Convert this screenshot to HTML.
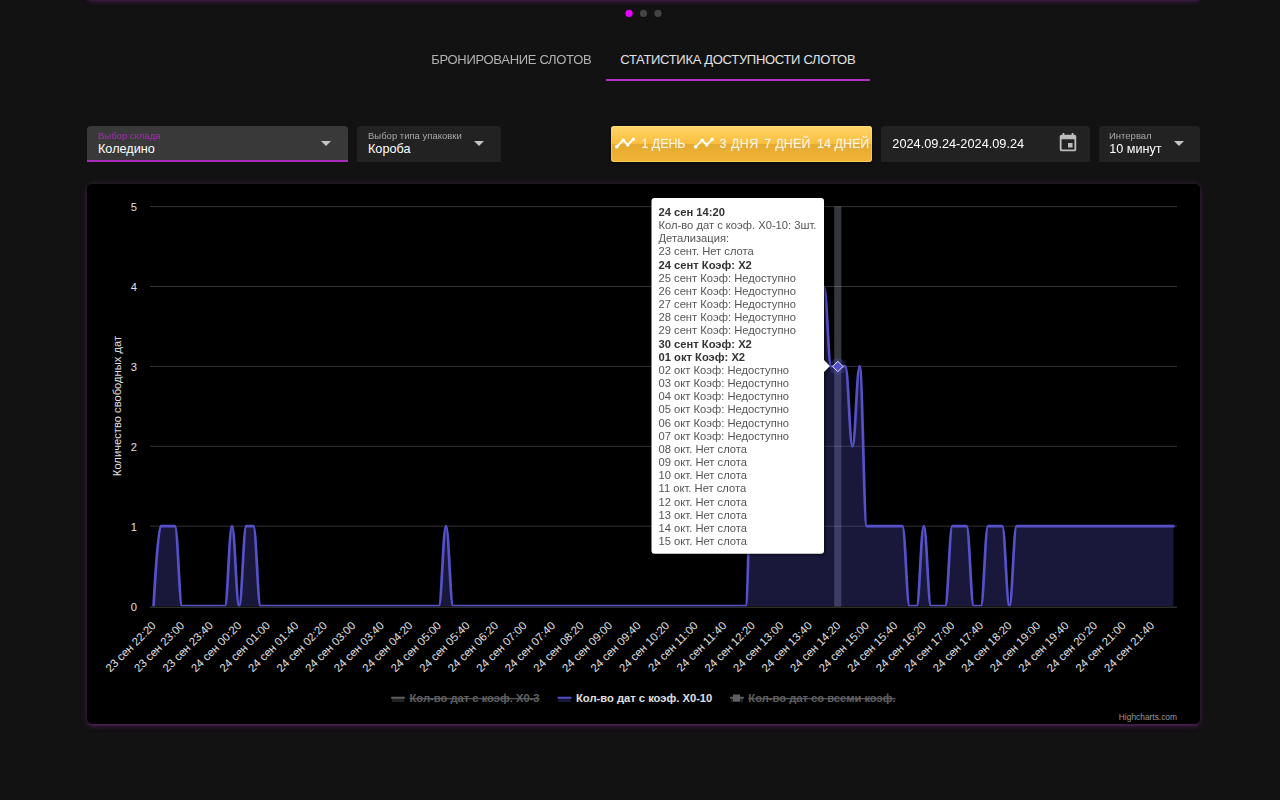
<!DOCTYPE html>
<html lang="ru">
<head>
<meta charset="utf-8">
<title>Статистика доступности слотов</title>
<style>
html,body{margin:0;padding:0;}
body{width:1280px;height:800px;overflow:hidden;background:#121212;color:#fff;
  font-family:"Liberation Sans",sans-serif;position:relative;}
.abs{position:absolute;}
.glow{box-shadow:0 3px 3px -2px rgba(200,60,225,.22),0 3px 4px 0 rgba(200,60,225,.15),0 1px 8px 0 rgba(200,60,225,.11),0 -1px 5px 0 rgba(255,255,255,.05);}
.topcard{left:87px;top:-41.4px;width:1113px;height:40px;background:#000;border-radius:4px;}
.tab{top:45px;height:34px;line-height:29px;font-size:13px;letter-spacing:-0.31px;white-space:nowrap;text-align:center;color:#b2b2b2;}
.tab.on{color:#e2e2e2;border-bottom:2px solid #b42fc4;}
.field{top:126px;height:36px;background:#222;border-radius:4px 4px 0 0;box-sizing:border-box;}
.field .lbl{position:absolute;top:4px;font-size:9.5px;line-height:11px;color:#a8a8a8;white-space:nowrap;will-change:transform;}
.field .val{position:absolute;top:15px;font-size:12.67px;line-height:16px;color:#fff;white-space:nowrap;}
.arrow{position:absolute;width:0;height:0;border-left:5px solid transparent;border-right:5px solid transparent;border-top:5px solid #c4c4c4;}
.gs{will-change:transform;}
.btns{left:611px;top:126px;width:261px;height:36px;border-radius:3px;
  background:linear-gradient(to bottom,#ffd56c 0%,#fbbe3c 49.5%,#e4a92f 50.5%,#f1b636 100%);
  box-shadow:0 1px 3px rgba(0,0,0,.6),inset 0 0 0 1px rgba(255,226,140,.45);}
.btns span{position:absolute;top:0;line-height:36px;font-size:12.3px;color:rgba(255,255,255,.82);white-space:nowrap;letter-spacing:.3px;-webkit-text-stroke:.35px rgba(255,255,255,.6);
  text-shadow:0 1px 0 rgba(160,110,0,.25);}
.btns svg{position:absolute;top:6.3px;width:22px;height:22px;fill:#fff;}
.card{left:87px;top:184px;width:1112.5px;height:540px;background:#000;border-radius:5px;}
svg text{font-family:"Liberation Sans",sans-serif;}
</style>
</head>
<body>
<div class="abs topcard glow"></div>

<svg class="abs" style="left:620px;top:5px;" width="46" height="17" viewBox="620 5 46 17">
  <circle cx="629.05" cy="13.45" r="3.6" fill="#e800ff"/>
  <circle cx="643.5" cy="13.45" r="3.6" fill="#444"/>
  <circle cx="658" cy="13.45" r="3.6" fill="#444"/>
</svg>

<div class="abs tab gs" style="left:416.7px;width:188.6px;">БРОНИРОВАНИЕ СЛОТОВ</div>
<div class="abs tab on" style="left:605.5px;width:264.5px;">СТАТИСТИКА ДОСТУПНОСТИ СЛОТОВ</div>

<div class="abs field" style="left:87px;width:261px;background:#393939;border-bottom:2px solid #ab2cbb;">
  <div class="lbl" style="left:11px;color:#a72db6;">Выбор склада</div>
  <div class="val" style="left:11px;">Коледино</div>
  <div class="arrow" style="left:233.8px;top:15px;"></div>
</div>
<div class="abs field" style="left:357px;width:144px;">
  <div class="lbl" style="left:11px;">Выбор типа упаковки</div>
  <div class="val" style="left:11px;">Короба</div>
  <div class="arrow" style="left:117px;top:15px;"></div>
</div>

<div class="abs btns gs">
  <svg style="left:2.9px" viewBox="0 0 24 24"><path d="M3,14L3.5,14.07L8.07,9.5C7.89,8.85 8.06,8.11 8.59,7.59C9.37,6.8 10.63,6.8 11.41,7.59C11.94,8.11 12.11,8.85 11.93,9.5L14.5,12.07L15,12C15.18,12 15.35,12 15.5,12.07L19.07,8.5C19,8.35 19,8.18 19,8A2,2 0 0,1 21,6A2,2 0 0,1 23,8A2,2 0 0,1 21,10C20.82,10 20.65,10 20.5,9.93L16.93,13.5C17,13.65 17,13.82 17,14A2,2 0 0,1 15,16A2,2 0 0,1 13,14L13.07,13.5L10.5,10.93C10.18,11 9.82,11 9.5,10.93L4.93,15.5L5,16A2,2 0 0,1 3,18A2,2 0 0,1 1,16A2,2 0 0,1 3,14Z"/></svg>
  <span style="left:30.6px;letter-spacing:0">1 ДЕНЬ</span>
  <svg style="left:81.9px" viewBox="0 0 24 24"><path d="M3,14L3.5,14.07L8.07,9.5C7.89,8.85 8.06,8.11 8.59,7.59C9.37,6.8 10.63,6.8 11.41,7.59C11.94,8.11 12.11,8.85 11.93,9.5L14.5,12.07L15,12C15.18,12 15.35,12 15.5,12.07L19.07,8.5C19,8.35 19,8.18 19,8A2,2 0 0,1 21,6A2,2 0 0,1 23,8A2,2 0 0,1 21,10C20.82,10 20.65,10 20.5,9.93L16.93,13.5C17,13.65 17,13.82 17,14A2,2 0 0,1 15,16A2,2 0 0,1 13,14L13.07,13.5L10.5,10.93C10.18,11 9.82,11 9.5,10.93L4.93,15.5L5,16A2,2 0 0,1 3,18A2,2 0 0,1 1,16A2,2 0 0,1 3,14Z"/></svg>
  <span style="left:108.6px;letter-spacing:.55px">3 ДНЯ</span>
  <span style="left:153.3px">7 ДНЕЙ</span>
  <span style="left:205.9px;letter-spacing:.15px">14 ДНЕЙ</span>
</div>

<div class="abs field gs" style="left:881px;width:209px;">
  <div class="val" style="left:11.3px;top:10px;font-size:12.76px;">2024.09.24-2024.09.24</div>
  <svg style="position:absolute;left:176px;top:6px;width:22px;height:22px;fill:#bdbdbd" viewBox="0 0 24 24"><path d="M19,19H5V8H19M16,1V3H8V1H6V3H5C3.89,3 3,3.89 3,5V19A2,2 0 0,0 5,21H19A2,2 0 0,0 21,19V5C21,3.89 20.1,3 19,3H18V1M17,12H12V17H17V12Z"/></svg>
</div>
<div class="abs field gs" style="left:1099px;width:101px;">
  <div class="lbl" style="left:10.2px;">Интервал</div>
  <div class="val" style="left:10.2px;">10 минут</div>
  <div class="arrow" style="left:74.6px;top:15px;"></div>
</div>

<div class="abs card glow"></div>
<svg class="abs" style="left:87px;top:184px;" width="1113" height="540" viewBox="87 184 1113 540">
  <g>
<path d="M 150.0 526.2 L 1177.0 526.2" stroke="#333333" stroke-width="1" fill="none"/>
<path d="M 150.0 446.3 L 1177.0 446.3" stroke="#333333" stroke-width="1" fill="none"/>
<path d="M 150.0 366.4 L 1177.0 366.4" stroke="#333333" stroke-width="1" fill="none"/>
<path d="M 150.0 286.5 L 1177.0 286.5" stroke="#333333" stroke-width="1" fill="none"/>
<path d="M 150.0 206.6 L 1177.0 206.6" stroke="#333333" stroke-width="1" fill="none"/>
<path d="M 150 607.15 L 1177 607.15" stroke="#2d2d2d" stroke-width="1.5" fill="none"/>

  </g>
  <g font-size="11.2px" fill="#e0e0e3">
<text x="137" y="610.5" text-anchor="end">0</text>
<text x="137" y="530.5" text-anchor="end">1</text>
<text x="137" y="450.5" text-anchor="end">2</text>
<text x="137" y="370.5" text-anchor="end">3</text>
<text x="137" y="290.5" text-anchor="end">4</text>
<text x="137" y="210.5" text-anchor="end">5</text>

  </g>
  <text x="121" y="406" font-size="11.2px" fill="#e0e0e3" text-anchor="middle" transform="rotate(-90 121 406)">Количество свободных дат</text>
  <!-- crosshair -->
  <rect x="834.2" y="206.5" width="7.13" height="400" fill="rgba(204,214,235,0.25)"/>
  <!-- series -->
  <clipPath id="pc"><rect x="150" y="200" width="1027.5" height="406.2"/></clipPath>
  <g clip-path="url(#pc)">
  <path d="M 153.57 606.05 C 153.57 606.05 157.85 526.17 160.70 526.17 C 163.55 526.17 164.98 526.17 167.83 526.17 C 170.68 526.17 172.11 526.17 174.96 526.17 C 177.81 526.17 179.24 606.05 182.09 606.05 C 184.95 606.05 186.37 606.05 189.23 606.05 C 192.08 606.05 193.50 606.05 196.36 606.05 C 199.21 606.05 200.64 606.05 203.49 606.05 C 206.34 606.05 207.77 606.05 210.62 606.05 C 213.47 606.05 214.90 606.05 217.75 606.05 C 220.61 606.05 222.03 606.05 224.89 606.05 C 227.74 606.05 229.16 526.17 232.02 526.17 C 234.87 526.17 236.30 606.05 239.15 606.05 C 242.00 606.05 243.43 526.17 246.28 526.17 C 249.13 526.17 250.56 526.17 253.41 526.17 C 256.27 526.17 257.69 606.05 260.55 606.05 C 263.40 606.05 264.82 606.05 267.68 606.05 C 270.53 606.05 271.96 606.05 274.81 606.05 C 277.66 606.05 279.09 606.05 281.94 606.05 C 284.79 606.05 286.22 606.05 289.07 606.05 C 291.93 606.05 293.35 606.05 296.20 606.05 C 299.06 606.05 300.48 606.05 303.34 606.05 C 306.19 606.05 307.62 606.05 310.47 606.05 C 313.32 606.05 314.75 606.05 317.60 606.05 C 320.45 606.05 321.88 606.05 324.73 606.05 C 327.59 606.05 329.01 606.05 331.86 606.05 C 334.72 606.05 336.14 606.05 339.00 606.05 C 341.85 606.05 343.28 606.05 346.13 606.05 C 348.98 606.05 350.41 606.05 353.26 606.05 C 356.11 606.05 357.54 606.05 360.39 606.05 C 363.25 606.05 364.67 606.05 367.52 606.05 C 370.38 606.05 371.80 606.05 374.66 606.05 C 377.51 606.05 378.94 606.05 381.79 606.05 C 384.64 606.05 386.07 606.05 388.92 606.05 C 391.77 606.05 393.20 606.05 396.05 606.05 C 398.90 606.05 400.33 606.05 403.18 606.05 C 406.04 606.05 407.46 606.05 410.32 606.05 C 413.17 606.05 414.60 606.05 417.45 606.05 C 420.30 606.05 421.73 606.05 424.58 606.05 C 427.43 606.05 428.86 606.05 431.71 606.05 C 434.56 606.05 435.99 606.05 438.84 606.05 C 441.70 606.05 443.12 526.17 445.98 526.17 C 448.83 526.17 450.25 606.05 453.11 606.05 C 455.96 606.05 457.39 606.05 460.24 606.05 C 463.09 606.05 464.52 606.05 467.37 606.05 C 470.22 606.05 471.65 606.05 474.50 606.05 C 477.36 606.05 478.78 606.05 481.64 606.05 C 484.49 606.05 485.91 606.05 488.77 606.05 C 491.62 606.05 493.05 606.05 495.90 606.05 C 498.75 606.05 500.18 606.05 503.03 606.05 C 505.88 606.05 507.31 606.05 510.16 606.05 C 513.02 606.05 514.44 606.05 517.30 606.05 C 520.15 606.05 521.57 606.05 524.43 606.05 C 527.28 606.05 528.71 606.05 531.56 606.05 C 534.41 606.05 535.84 606.05 538.69 606.05 C 541.54 606.05 542.97 606.05 545.82 606.05 C 548.68 606.05 550.10 606.05 552.95 606.05 C 555.81 606.05 557.23 606.05 560.09 606.05 C 562.94 606.05 564.37 606.05 567.22 606.05 C 570.07 606.05 571.50 606.05 574.35 606.05 C 577.20 606.05 578.63 606.05 581.48 606.05 C 584.34 606.05 585.76 606.05 588.61 606.05 C 591.47 606.05 592.89 606.05 595.75 606.05 C 598.60 606.05 600.03 606.05 602.88 606.05 C 605.73 606.05 607.16 606.05 610.01 606.05 C 612.86 606.05 614.29 606.05 617.14 606.05 C 620.00 606.05 621.42 606.05 624.27 606.05 C 627.13 606.05 628.55 606.05 631.41 606.05 C 634.26 606.05 635.69 606.05 638.54 606.05 C 641.39 606.05 642.82 606.05 645.67 606.05 C 648.52 606.05 649.95 606.05 652.80 606.05 C 655.65 606.05 657.08 606.05 659.93 606.05 C 662.79 606.05 664.21 606.05 667.07 606.05 C 669.92 606.05 671.35 606.05 674.20 606.05 C 677.05 606.05 678.48 606.05 681.33 606.05 C 684.18 606.05 685.61 606.05 688.46 606.05 C 691.31 606.05 692.74 606.05 695.59 606.05 C 698.45 606.05 699.87 606.05 702.73 606.05 C 705.58 606.05 707.00 606.05 709.86 606.05 C 712.71 606.05 714.14 606.05 716.99 606.05 C 719.84 606.05 721.27 606.05 724.12 606.05 C 726.97 606.05 728.40 606.05 731.25 606.05 C 734.11 606.05 735.53 606.05 738.39 606.05 C 741.24 606.05 742.66 606.05 745.52 606.05 C 748.37 606.05 749.80 446.29 752.65 446.29 C 755.50 446.29 756.93 446.29 759.78 446.29 C 762.63 446.29 764.06 366.41 766.91 366.41 C 769.77 366.41 771.19 366.41 774.05 366.41 C 776.90 366.41 778.32 366.41 781.18 366.41 C 784.03 366.41 785.46 286.53 788.31 286.53 C 791.16 286.53 792.59 286.53 795.44 286.53 C 798.29 286.53 799.72 286.53 802.57 286.53 C 805.43 286.53 806.85 286.53 809.70 286.53 C 812.56 286.53 813.98 286.53 816.84 286.53 C 819.69 286.53 821.12 286.53 823.97 286.53 C 826.82 286.53 828.25 366.41 831.10 366.41 C 833.95 366.41 835.38 366.41 838.23 366.41 C 841.09 366.41 842.51 366.41 845.36 366.41 C 848.22 366.41 849.64 446.29 852.50 446.29 C 855.35 446.29 856.78 366.41 859.63 366.41 C 862.48 366.41 863.91 526.17 866.76 526.17 C 869.61 526.17 871.04 526.17 873.89 526.17 C 876.75 526.17 878.17 526.17 881.02 526.17 C 883.88 526.17 885.30 526.17 888.16 526.17 C 891.01 526.17 892.44 526.17 895.29 526.17 C 898.14 526.17 899.57 526.17 902.42 526.17 C 905.27 526.17 906.70 606.05 909.55 606.05 C 912.40 606.05 913.83 606.05 916.68 606.05 C 919.54 606.05 920.96 526.17 923.82 526.17 C 926.67 526.17 928.10 606.05 930.95 606.05 C 933.80 606.05 935.23 606.05 938.08 606.05 C 940.93 606.05 942.36 606.05 945.21 606.05 C 948.06 606.05 949.49 526.17 952.34 526.17 C 955.20 526.17 956.62 526.17 959.48 526.17 C 962.33 526.17 963.75 526.17 966.61 526.17 C 969.46 526.17 970.89 606.05 973.74 606.05 C 976.59 606.05 978.02 606.05 980.87 606.05 C 983.72 606.05 985.15 526.17 988.00 526.17 C 990.86 526.17 992.28 526.17 995.14 526.17 C 997.99 526.17 999.41 526.17 1002.27 526.17 C 1005.12 526.17 1006.55 606.05 1009.40 606.05 C 1012.25 606.05 1013.68 526.17 1016.53 526.17 C 1019.38 526.17 1020.81 526.17 1023.66 526.17 C 1026.52 526.17 1027.94 526.17 1030.80 526.17 C 1033.65 526.17 1035.07 526.17 1037.93 526.17 C 1040.78 526.17 1042.21 526.17 1045.06 526.17 C 1047.91 526.17 1049.34 526.17 1052.19 526.17 C 1055.04 526.17 1056.47 526.17 1059.32 526.17 C 1062.18 526.17 1063.60 526.17 1066.45 526.17 C 1069.31 526.17 1070.73 526.17 1073.59 526.17 C 1076.44 526.17 1077.87 526.17 1080.72 526.17 C 1083.57 526.17 1085.00 526.17 1087.85 526.17 C 1090.70 526.17 1092.13 526.17 1094.98 526.17 C 1097.84 526.17 1099.26 526.17 1102.11 526.17 C 1104.97 526.17 1106.39 526.17 1109.25 526.17 C 1112.10 526.17 1113.53 526.17 1116.38 526.17 C 1119.23 526.17 1120.66 526.17 1123.51 526.17 C 1126.36 526.17 1127.79 526.17 1130.64 526.17 C 1133.50 526.17 1134.92 526.17 1137.77 526.17 C 1140.63 526.17 1142.05 526.17 1144.91 526.17 C 1147.76 526.17 1149.19 526.17 1152.04 526.17 C 1154.89 526.17 1156.32 526.17 1159.17 526.17 C 1162.02 526.17 1163.45 526.17 1166.30 526.17 C 1169.15 526.17 1173.43 526.17 1173.43 526.17 L 1173.43 606.05 L 153.57 606.05 Z" fill="#544fc5" fill-opacity="0.3" stroke="none"/>
  <path d="M 153.57 606.05 C 153.57 606.05 157.85 526.17 160.70 526.17 C 163.55 526.17 164.98 526.17 167.83 526.17 C 170.68 526.17 172.11 526.17 174.96 526.17 C 177.81 526.17 179.24 606.05 182.09 606.05 C 184.95 606.05 186.37 606.05 189.23 606.05 C 192.08 606.05 193.50 606.05 196.36 606.05 C 199.21 606.05 200.64 606.05 203.49 606.05 C 206.34 606.05 207.77 606.05 210.62 606.05 C 213.47 606.05 214.90 606.05 217.75 606.05 C 220.61 606.05 222.03 606.05 224.89 606.05 C 227.74 606.05 229.16 526.17 232.02 526.17 C 234.87 526.17 236.30 606.05 239.15 606.05 C 242.00 606.05 243.43 526.17 246.28 526.17 C 249.13 526.17 250.56 526.17 253.41 526.17 C 256.27 526.17 257.69 606.05 260.55 606.05 C 263.40 606.05 264.82 606.05 267.68 606.05 C 270.53 606.05 271.96 606.05 274.81 606.05 C 277.66 606.05 279.09 606.05 281.94 606.05 C 284.79 606.05 286.22 606.05 289.07 606.05 C 291.93 606.05 293.35 606.05 296.20 606.05 C 299.06 606.05 300.48 606.05 303.34 606.05 C 306.19 606.05 307.62 606.05 310.47 606.05 C 313.32 606.05 314.75 606.05 317.60 606.05 C 320.45 606.05 321.88 606.05 324.73 606.05 C 327.59 606.05 329.01 606.05 331.86 606.05 C 334.72 606.05 336.14 606.05 339.00 606.05 C 341.85 606.05 343.28 606.05 346.13 606.05 C 348.98 606.05 350.41 606.05 353.26 606.05 C 356.11 606.05 357.54 606.05 360.39 606.05 C 363.25 606.05 364.67 606.05 367.52 606.05 C 370.38 606.05 371.80 606.05 374.66 606.05 C 377.51 606.05 378.94 606.05 381.79 606.05 C 384.64 606.05 386.07 606.05 388.92 606.05 C 391.77 606.05 393.20 606.05 396.05 606.05 C 398.90 606.05 400.33 606.05 403.18 606.05 C 406.04 606.05 407.46 606.05 410.32 606.05 C 413.17 606.05 414.60 606.05 417.45 606.05 C 420.30 606.05 421.73 606.05 424.58 606.05 C 427.43 606.05 428.86 606.05 431.71 606.05 C 434.56 606.05 435.99 606.05 438.84 606.05 C 441.70 606.05 443.12 526.17 445.98 526.17 C 448.83 526.17 450.25 606.05 453.11 606.05 C 455.96 606.05 457.39 606.05 460.24 606.05 C 463.09 606.05 464.52 606.05 467.37 606.05 C 470.22 606.05 471.65 606.05 474.50 606.05 C 477.36 606.05 478.78 606.05 481.64 606.05 C 484.49 606.05 485.91 606.05 488.77 606.05 C 491.62 606.05 493.05 606.05 495.90 606.05 C 498.75 606.05 500.18 606.05 503.03 606.05 C 505.88 606.05 507.31 606.05 510.16 606.05 C 513.02 606.05 514.44 606.05 517.30 606.05 C 520.15 606.05 521.57 606.05 524.43 606.05 C 527.28 606.05 528.71 606.05 531.56 606.05 C 534.41 606.05 535.84 606.05 538.69 606.05 C 541.54 606.05 542.97 606.05 545.82 606.05 C 548.68 606.05 550.10 606.05 552.95 606.05 C 555.81 606.05 557.23 606.05 560.09 606.05 C 562.94 606.05 564.37 606.05 567.22 606.05 C 570.07 606.05 571.50 606.05 574.35 606.05 C 577.20 606.05 578.63 606.05 581.48 606.05 C 584.34 606.05 585.76 606.05 588.61 606.05 C 591.47 606.05 592.89 606.05 595.75 606.05 C 598.60 606.05 600.03 606.05 602.88 606.05 C 605.73 606.05 607.16 606.05 610.01 606.05 C 612.86 606.05 614.29 606.05 617.14 606.05 C 620.00 606.05 621.42 606.05 624.27 606.05 C 627.13 606.05 628.55 606.05 631.41 606.05 C 634.26 606.05 635.69 606.05 638.54 606.05 C 641.39 606.05 642.82 606.05 645.67 606.05 C 648.52 606.05 649.95 606.05 652.80 606.05 C 655.65 606.05 657.08 606.05 659.93 606.05 C 662.79 606.05 664.21 606.05 667.07 606.05 C 669.92 606.05 671.35 606.05 674.20 606.05 C 677.05 606.05 678.48 606.05 681.33 606.05 C 684.18 606.05 685.61 606.05 688.46 606.05 C 691.31 606.05 692.74 606.05 695.59 606.05 C 698.45 606.05 699.87 606.05 702.73 606.05 C 705.58 606.05 707.00 606.05 709.86 606.05 C 712.71 606.05 714.14 606.05 716.99 606.05 C 719.84 606.05 721.27 606.05 724.12 606.05 C 726.97 606.05 728.40 606.05 731.25 606.05 C 734.11 606.05 735.53 606.05 738.39 606.05 C 741.24 606.05 742.66 606.05 745.52 606.05 C 748.37 606.05 749.80 446.29 752.65 446.29 C 755.50 446.29 756.93 446.29 759.78 446.29 C 762.63 446.29 764.06 366.41 766.91 366.41 C 769.77 366.41 771.19 366.41 774.05 366.41 C 776.90 366.41 778.32 366.41 781.18 366.41 C 784.03 366.41 785.46 286.53 788.31 286.53 C 791.16 286.53 792.59 286.53 795.44 286.53 C 798.29 286.53 799.72 286.53 802.57 286.53 C 805.43 286.53 806.85 286.53 809.70 286.53 C 812.56 286.53 813.98 286.53 816.84 286.53 C 819.69 286.53 821.12 286.53 823.97 286.53 C 826.82 286.53 828.25 366.41 831.10 366.41 C 833.95 366.41 835.38 366.41 838.23 366.41 C 841.09 366.41 842.51 366.41 845.36 366.41 C 848.22 366.41 849.64 446.29 852.50 446.29 C 855.35 446.29 856.78 366.41 859.63 366.41 C 862.48 366.41 863.91 526.17 866.76 526.17 C 869.61 526.17 871.04 526.17 873.89 526.17 C 876.75 526.17 878.17 526.17 881.02 526.17 C 883.88 526.17 885.30 526.17 888.16 526.17 C 891.01 526.17 892.44 526.17 895.29 526.17 C 898.14 526.17 899.57 526.17 902.42 526.17 C 905.27 526.17 906.70 606.05 909.55 606.05 C 912.40 606.05 913.83 606.05 916.68 606.05 C 919.54 606.05 920.96 526.17 923.82 526.17 C 926.67 526.17 928.10 606.05 930.95 606.05 C 933.80 606.05 935.23 606.05 938.08 606.05 C 940.93 606.05 942.36 606.05 945.21 606.05 C 948.06 606.05 949.49 526.17 952.34 526.17 C 955.20 526.17 956.62 526.17 959.48 526.17 C 962.33 526.17 963.75 526.17 966.61 526.17 C 969.46 526.17 970.89 606.05 973.74 606.05 C 976.59 606.05 978.02 606.05 980.87 606.05 C 983.72 606.05 985.15 526.17 988.00 526.17 C 990.86 526.17 992.28 526.17 995.14 526.17 C 997.99 526.17 999.41 526.17 1002.27 526.17 C 1005.12 526.17 1006.55 606.05 1009.40 606.05 C 1012.25 606.05 1013.68 526.17 1016.53 526.17 C 1019.38 526.17 1020.81 526.17 1023.66 526.17 C 1026.52 526.17 1027.94 526.17 1030.80 526.17 C 1033.65 526.17 1035.07 526.17 1037.93 526.17 C 1040.78 526.17 1042.21 526.17 1045.06 526.17 C 1047.91 526.17 1049.34 526.17 1052.19 526.17 C 1055.04 526.17 1056.47 526.17 1059.32 526.17 C 1062.18 526.17 1063.60 526.17 1066.45 526.17 C 1069.31 526.17 1070.73 526.17 1073.59 526.17 C 1076.44 526.17 1077.87 526.17 1080.72 526.17 C 1083.57 526.17 1085.00 526.17 1087.85 526.17 C 1090.70 526.17 1092.13 526.17 1094.98 526.17 C 1097.84 526.17 1099.26 526.17 1102.11 526.17 C 1104.97 526.17 1106.39 526.17 1109.25 526.17 C 1112.10 526.17 1113.53 526.17 1116.38 526.17 C 1119.23 526.17 1120.66 526.17 1123.51 526.17 C 1126.36 526.17 1127.79 526.17 1130.64 526.17 C 1133.50 526.17 1134.92 526.17 1137.77 526.17 C 1140.63 526.17 1142.05 526.17 1144.91 526.17 C 1147.76 526.17 1149.19 526.17 1152.04 526.17 C 1154.89 526.17 1156.32 526.17 1159.17 526.17 C 1162.02 526.17 1163.45 526.17 1166.30 526.17 C 1169.15 526.17 1173.43 526.17 1173.43 526.17" fill="none" stroke="#5651c8" stroke-width="2.7" stroke-linejoin="round" stroke-linecap="round"/>
  </g>
  <!-- halo + marker -->
  <circle cx="837.8" cy="366.5" r="8.3" fill="#544fc5" fill-opacity="0.3"/>
  <path d="M 837.8 361.3 L 843 366.5 L 837.8 371.7 L 832.6 366.5 Z" fill="#544fc5" stroke="#e6e6f0" stroke-width="1"/>
  <g font-size="11.35px" fill="#e0e0e3">
<text x="156.57" y="626.40" text-anchor="end" transform="rotate(-45 156.57 626.40)">23 сен 22:20</text>
<text x="185.09" y="626.40" text-anchor="end" transform="rotate(-45 185.09 626.40)">23 сен 23:00</text>
<text x="213.62" y="626.40" text-anchor="end" transform="rotate(-45 213.62 626.40)">23 сен 23:40</text>
<text x="242.15" y="626.40" text-anchor="end" transform="rotate(-45 242.15 626.40)">24 сен 00:20</text>
<text x="270.68" y="626.40" text-anchor="end" transform="rotate(-45 270.68 626.40)">24 сен 01:00</text>
<text x="299.20" y="626.40" text-anchor="end" transform="rotate(-45 299.20 626.40)">24 сен 01:40</text>
<text x="327.73" y="626.40" text-anchor="end" transform="rotate(-45 327.73 626.40)">24 сен 02:20</text>
<text x="356.26" y="626.40" text-anchor="end" transform="rotate(-45 356.26 626.40)">24 сен 03:00</text>
<text x="384.79" y="626.40" text-anchor="end" transform="rotate(-45 384.79 626.40)">24 сен 03:40</text>
<text x="413.32" y="626.40" text-anchor="end" transform="rotate(-45 413.32 626.40)">24 сен 04:20</text>
<text x="441.84" y="626.40" text-anchor="end" transform="rotate(-45 441.84 626.40)">24 сен 05:00</text>
<text x="470.37" y="626.40" text-anchor="end" transform="rotate(-45 470.37 626.40)">24 сен 05:40</text>
<text x="498.90" y="626.40" text-anchor="end" transform="rotate(-45 498.90 626.40)">24 сен 06:20</text>
<text x="527.43" y="626.40" text-anchor="end" transform="rotate(-45 527.43 626.40)">24 сен 07:00</text>
<text x="555.95" y="626.40" text-anchor="end" transform="rotate(-45 555.95 626.40)">24 сен 07:40</text>
<text x="584.48" y="626.40" text-anchor="end" transform="rotate(-45 584.48 626.40)">24 сен 08:20</text>
<text x="613.01" y="626.40" text-anchor="end" transform="rotate(-45 613.01 626.40)">24 сен 09:00</text>
<text x="641.54" y="626.40" text-anchor="end" transform="rotate(-45 641.54 626.40)">24 сен 09:40</text>
<text x="670.07" y="626.40" text-anchor="end" transform="rotate(-45 670.07 626.40)">24 сен 10:20</text>
<text x="698.59" y="626.40" text-anchor="end" transform="rotate(-45 698.59 626.40)">24 сен 11:00</text>
<text x="727.12" y="626.40" text-anchor="end" transform="rotate(-45 727.12 626.40)">24 сен 11:40</text>
<text x="755.65" y="626.40" text-anchor="end" transform="rotate(-45 755.65 626.40)">24 сен 12:20</text>
<text x="784.18" y="626.40" text-anchor="end" transform="rotate(-45 784.18 626.40)">24 сен 13:00</text>
<text x="812.70" y="626.40" text-anchor="end" transform="rotate(-45 812.70 626.40)">24 сен 13:40</text>
<text x="841.23" y="626.40" text-anchor="end" transform="rotate(-45 841.23 626.40)">24 сен 14:20</text>
<text x="869.76" y="626.40" text-anchor="end" transform="rotate(-45 869.76 626.40)">24 сен 15:00</text>
<text x="898.29" y="626.40" text-anchor="end" transform="rotate(-45 898.29 626.40)">24 сен 15:40</text>
<text x="926.82" y="626.40" text-anchor="end" transform="rotate(-45 926.82 626.40)">24 сен 16:20</text>
<text x="955.34" y="626.40" text-anchor="end" transform="rotate(-45 955.34 626.40)">24 сен 17:00</text>
<text x="983.87" y="626.40" text-anchor="end" transform="rotate(-45 983.87 626.40)">24 сен 17:40</text>
<text x="1012.40" y="626.40" text-anchor="end" transform="rotate(-45 1012.40 626.40)">24 сен 18:20</text>
<text x="1040.93" y="626.40" text-anchor="end" transform="rotate(-45 1040.93 626.40)">24 сен 19:00</text>
<text x="1069.45" y="626.40" text-anchor="end" transform="rotate(-45 1069.45 626.40)">24 сен 19:40</text>
<text x="1097.98" y="626.40" text-anchor="end" transform="rotate(-45 1097.98 626.40)">24 сен 20:20</text>
<text x="1126.51" y="626.40" text-anchor="end" transform="rotate(-45 1126.51 626.40)">24 сен 21:00</text>
<text x="1155.04" y="626.40" text-anchor="end" transform="rotate(-45 1155.04 626.40)">24 сен 21:40</text>

  </g>
  <!-- legend -->
  <g font-size="11.2px" font-weight="bold">
    <rect x="391" y="696.7" width="14" height="2" rx="1" fill="#606063"/>
    <rect x="392" y="698.7" width="12" height="3.3" fill="#606063" fill-opacity="0.35"/>
    <text x="409.5" y="702" fill="#606063" text-decoration="line-through">Кол-во дат с коэф. X0-3</text>
    <rect x="557.5" y="696.7" width="14" height="2" rx="1" fill="#544fc5"/>
    <rect x="558.5" y="698.7" width="12" height="3.3" fill="#544fc5" fill-opacity="0.3"/>
    <text x="576" y="702" fill="#e0e0e3">Кол-во дат с коэф. X0-10</text>
    <rect x="730" y="696.7" width="14" height="2" rx="1" fill="#606063"/>
    <rect x="731" y="698.7" width="12" height="3.3" fill="#606063" fill-opacity="0.35"/>
    <rect x="733" y="694.5" width="7" height="7" fill="#606063"/>
    <text x="748.3" y="702" fill="#606063" text-decoration="line-through">Кол-во дат со всеми коэф.</text>
  </g>
  <text x="1177" y="720" font-size="8.4px" fill="#999999" text-anchor="end">Highcharts.com</text>
</svg>
<!-- tooltip -->
<svg class="abs gs" style="left:87px;top:184px;" width="1113" height="540" viewBox="87 184 1113 540">
  <defs><filter id="ts" x="-10%" y="-5%" width="120%" height="110%"><feGaussianBlur stdDeviation="1.6"/></filter></defs>
  <g>
    <path d="M 654.5 198 L 821 198 Q 824 198 824 201 L 824 360 L 830 366 L 824 372 L 824 550.8 Q 824 553.8 821 553.8 L 654.5 553.8 Q 651.5 553.8 651.5 550.8 L 651.5 201 Q 651.5 198 654.5 198 Z" fill="#000" opacity=".75" transform="translate(1 1)" filter="url(#ts)"/>
    <path d="M 654.5 198 L 821 198 Q 824 198 824 201 L 824 360 L 830 366 L 824 372 L 824 550.8 Q 824 553.8 821 553.8 L 654.5 553.8 Q 651.5 553.8 651.5 550.8 L 651.5 201 Q 651.5 198 654.5 198 Z" fill="#ffffff"/>
    <g font-size="11.2px" fill="#555555">
<text x="658.5" y="215.90" font-weight="bold" fill="#333">24 сен 14:20</text>
<text x="658.5" y="229.06">Кол-во дат с коэф. X0-10: 3шт.</text>
<text x="658.5" y="242.22">Детализация:</text>
<text x="658.5" y="255.38">23 сент. Нет слота</text>
<text x="658.5" y="268.54" font-weight="bold" fill="#333">24 сент Коэф: X2</text>
<text x="658.5" y="281.70">25 сент Коэф: Недоступно</text>
<text x="658.5" y="294.86">26 сент Коэф: Недоступно</text>
<text x="658.5" y="308.02">27 сент Коэф: Недоступно</text>
<text x="658.5" y="321.18">28 сент Коэф: Недоступно</text>
<text x="658.5" y="334.34">29 сент Коэф: Недоступно</text>
<text x="658.5" y="347.50" font-weight="bold" fill="#333">30 сент Коэф: X2</text>
<text x="658.5" y="360.66" font-weight="bold" fill="#333">01 окт Коэф: X2</text>
<text x="658.5" y="373.82">02 окт Коэф: Недоступно</text>
<text x="658.5" y="386.98">03 окт Коэф: Недоступно</text>
<text x="658.5" y="400.14">04 окт Коэф: Недоступно</text>
<text x="658.5" y="413.30">05 окт Коэф: Недоступно</text>
<text x="658.5" y="427.06">06 окт Коэф: Недоступно</text>
<text x="658.5" y="439.62">07 окт Коэф: Недоступно</text>
<text x="658.5" y="452.78">08 окт. Нет слота</text>
<text x="658.5" y="465.94">09 окт. Нет слота</text>
<text x="658.5" y="479.10">10 окт. Нет слота</text>
<text x="658.5" y="492.26">11 окт. Нет слота</text>
<text x="658.5" y="506.02">12 окт. Нет слота</text>
<text x="658.5" y="518.58">13 окт. Нет слота</text>
<text x="658.5" y="531.74">14 окт. Нет слота</text>
<text x="658.5" y="544.90">15 окт. Нет слота</text>

    </g>
  </g>
</svg>
</body>
</html>
